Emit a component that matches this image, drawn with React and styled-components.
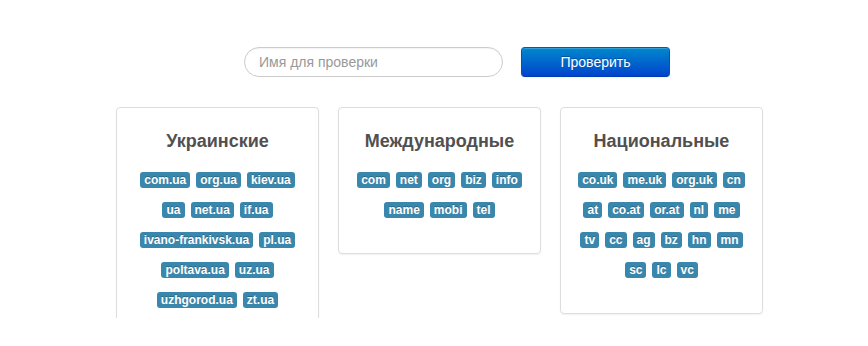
import React from "react";
import styled, { createGlobalStyle } from "styled-components";

const Global = createGlobalStyle`
  html, body { margin: 0; padding: 0; background: #fff; }
  body { font-family: "Liberation Sans", Arial, Helvetica, sans-serif; }
  * { box-sizing: border-box; }
`;

const Page = styled.div`
  width: 868px;
  height: 346px;
  overflow: hidden;
  background: #fff;
`;

const SearchBar = styled.form`
  display: flex;
  align-items: center;
  gap: 18px;
  padding: 47px 0 0 244px;
`;

const Input = styled.input`
  width: 259px;
  height: 30px;
  border: 1px solid #cccccc;
  border-radius: 15px;
  padding: 0 14px;
  font-family: "Liberation Sans", Arial, sans-serif;
  font-size: 14px;
  color: #555;
  outline: none;
  box-shadow: inset 0 1px 1px rgba(0, 0, 0, 0.05);
  &::placeholder { color: #999999; }
`;

const Button = styled.button`
  width: 149px;
  height: 30px;
  border: 1px solid #0044aa;
  border-color: #0055c0 #0050c0 #003bb3;
  border-radius: 4px;
  background: linear-gradient(to bottom, #0088cc, #0044cc);
  color: #fff;
  font-family: "Liberation Sans", Arial, sans-serif;
  font-size: 14px;
  text-shadow: 0 -1px 0 rgba(0, 0, 0, 0.25);
  box-shadow: inset 0 1px 0 rgba(255, 255, 255, 0.2), 0 1px 2px rgba(0, 0, 0, 0.05);
  cursor: pointer;
  padding: 0;
`;

const CardsClip = styled.div`
  height: 211px;
  margin-top: 30px;
  padding-left: 116px;
  overflow: hidden;
`;

const CardsRow = styled.div`
  display: flex;
  align-items: flex-start;
  gap: 19px;
`;

const Card = styled.section`
  width: 203px;
  border: 1px solid #dddddd;
  border-radius: 4px;
  box-shadow: 0 1px 2px rgba(0, 0, 0, 0.06);
  padding: 23px 14px 35px;
  text-align: center;
`;

const Title = styled.h3`
  margin: 0 0 21px;
  font-size: 18px;
  line-height: 20px;
  font-weight: bold;
  color: #505050;
`;

const Labels = styled.div`
  display: flex;
  flex-wrap: wrap;
  justify-content: center;
  column-gap: 6px;
  row-gap: 14px;
`;

const Label = styled.span`
  display: inline-block;
  height: 16px;
  padding: 0 4px;
  border-radius: 3px;
  background: #3a87ad;
  color: #fff;
  font-size: 12px;
  font-weight: bold;
  line-height: 16px;
  text-shadow: 0 -1px 0 rgba(0, 0, 0, 0.25);
  white-space: nowrap;
`;

const groups = [
  {
    title: "Украинские",
    items: ["com.ua", "org.ua", "kiev.ua", "ua", "net.ua", "if.ua", "ivano-frankivsk.ua", "pl.ua", "poltava.ua", "uz.ua", "uzhgorod.ua", "zt.ua"],
  },
  {
    title: "Международные",
    items: ["com", "net", "org", "biz", "info", "name", "mobi", "tel"],
  },
  {
    title: "Национальные",
    items: ["co.uk", "me.uk", "org.uk", "cn", "at", "co.at", "or.at", "nl", "me", "tv", "cc", "ag", "bz", "hn", "mn", "sc", "lc", "vc"],
  },
];

export default function App() {
  return (
    <Page>
      <Global />
      <SearchBar onSubmit={(e) => e.preventDefault()}>
        <Input type="text" placeholder="Имя для проверки" />
        <Button type="submit">Проверить</Button>
      </SearchBar>
      <CardsClip>
        <CardsRow>
          {groups.map((g) => (
            <Card key={g.title}>
              <Title>{g.title}</Title>
              <Labels>
                {g.items.map((it) => (
                  <Label key={it}>{it}</Label>
                ))}
              </Labels>
            </Card>
          ))}
        </CardsRow>
      </CardsClip>
    </Page>
  );
}
